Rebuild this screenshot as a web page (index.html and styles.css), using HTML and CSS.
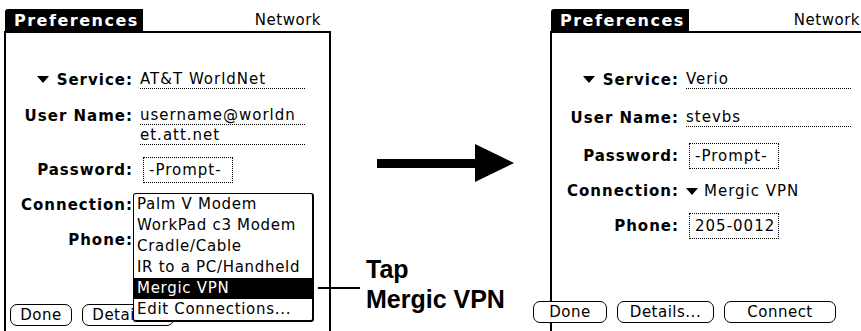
FILE: index.html
```html
<!DOCTYPE html>
<html lang="en">
<head>
    <meta charset="UTF-8">
    <title>Network Preferences - Mergic VPN</title>
    <link rel="stylesheet" href="styles.css">
</head>
<body>
    <div class="page">

        <!-- Linker Bildschirm: Auswahlliste offen -->
        <section class="screen">
            <header class="titlebar">
                <span class="tab">Preferences</span>
                <span class="panel-name">Network</span>
            </header>
            <div class="screen-body">
                <div class="row first">
                    <span class="label"><i class="tri"></i>Service:</span>
                    <span class="value"><span class="field">AT&amp;T WorldNet</span></span>
                </div>
                <div class="row double">
                    <span class="label">User Name:</span>
                    <span class="value">
                        <span class="field">username@worldn</span>
                        <span class="field">et.att.net</span>
                    </span>
                </div>
                <div class="row">
                    <span class="label">Password:</span>
                    <span class="value"><span class="box">-Prompt-</span></span>
                </div>
                <div class="row short">
                    <span class="label">Connection:</span>
                    <span class="value"><i class="tri"></i>Mergic VPN</span>
                </div>
                <div class="row">
                    <span class="label">Phone:</span>
                    <span class="value"><span class="box">205-0012</span></span>
                </div>
                <div class="buttons">
                    <span class="btn done">Done</span>
                    <span class="btn details">Details...</span>
                </div>
            </div>
            <ul class="popup">
                <li>Palm V Modem</li>
                <li>WorkPad c3 Modem</li>
                <li>Cradle/Cable</li>
                <li>IR to a PC/Handheld</li>
                <li class="selected">Mergic VPN</li>
                <li>Edit Connections...</li>
            </ul>
        </section>

        <!-- Mitte: Pfeil und Hinweis -->
        <div class="middle">
            <svg class="big-arrow" width="219" height="40" viewBox="0 0 219 40">
                <rect x="46" y="16" width="100" height="9" fill="#000"/>
                <polygon points="144,1 183,20 144,39" fill="#000"/>
            </svg>
            <div class="callout">
                <span class="callout-line"></span>
                <p class="callout-text">Tap<br>Mergic VPN</p>
            </div>
        </div>

        <!-- Rechter Bildschirm: Ergebnis -->
        <section class="screen result">
            <header class="titlebar">
                <span class="tab">Preferences</span>
                <span class="panel-name">Network</span>
            </header>
            <div class="screen-body">
                <div class="row first">
                    <span class="label"><i class="tri"></i>Service:</span>
                    <span class="value"><span class="field">Verio</span></span>
                </div>
                <div class="row">
                    <span class="label">User Name:</span>
                    <span class="value"><span class="field">stevbs</span></span>
                </div>
                <div class="row">
                    <span class="label">Password:</span>
                    <span class="value"><span class="box">-Prompt-</span></span>
                </div>
                <div class="row short">
                    <span class="label">Connection:</span>
                    <span class="value"><i class="tri"></i>Mergic VPN</span>
                </div>
                <div class="row">
                    <span class="label">Phone:</span>
                    <span class="value"><span class="box">205-0012</span></span>
                </div>
                <div class="buttons wide">
                    <span class="btn done">Done</span>
                    <span class="btn details">Details...</span>
                    <span class="btn connect">Connect</span>
                </div>
            </div>
        </section>

    </div>
</body>
</html>
```

FILE: styles.css
```css
body {
    margin: 0;
    background: #fff;
    color: #000;
    overflow: hidden;
}
.page {
    display: flex;
    width: 861px;
    height: 331px;
    overflow: hidden;
}

/* Palm-Bildschirm */
.screen {
    position: relative;
    flex-shrink: 0;
    width: 327px;
    height: 331px;
    padding-top: 9px;
    box-sizing: border-box;
    display: flex;
    flex-direction: column;
    font-family: "DejaVu Sans", sans-serif;
    font-size: 15px;
    letter-spacing: 1px;
}
.screen:first-child {
    margin-left: 4px;
}
.screen.result {
    width: 320px;
}
.titlebar {
    display: flex;
    justify-content: space-between;
    align-items: flex-start;
    height: 22px;
    border-bottom: 2px solid #000;
}
.tab {
    width: 138px;
    height: 22px;
    margin-left: 1px;
    padding-left: 9px;
    box-sizing: border-box;
    background: #000;
    color: #fff;
    font-weight: bold;
    font-size: 16px;
    letter-spacing: 1.5px;
    line-height: 23px;
    border-top-left-radius: 3px;
}
.panel-name {
    padding-right: 10px;
    line-height: 22px;
    letter-spacing: 0.5px;
}
.screen-body {
    flex: 1;
    display: flex;
    flex-direction: column;
    border-left: 2px solid #000;
    border-right: 2px solid #000;
}

/* Formularzeilen */
.row {
    display: flex;
    align-items: center;
    height: 38px;
    flex-shrink: 0;
}
.row.first {
    margin-top: 28px;
}
.row.short {
    height: 32px;
}
.row.double {
    height: 52px;
    align-items: flex-start;
    padding-top: 8px;
    box-sizing: border-box;
}
.label {
    width: 127px;
    flex-shrink: 0;
    text-align: right;
    font-weight: bold;
    white-space: nowrap;
}
.value {
    margin-left: 7px;
    display: flex;
    flex-direction: column;
    white-space: nowrap;
}
.row.short .value {
    flex-direction: row;
    align-items: center;
}
.field {
    display: block;
    width: 165px;
    line-height: 17px;
    border-bottom: 1px dotted #000;
}
.field + .field {
    margin-top: 2px;
}
.box {
    display: block;
    width: 90px;
    height: 26px;
    margin-left: 3px;
    padding-left: 5px;
    box-sizing: border-box;
    border: 1px dotted #000;
    line-height: 24px;
}
.tri {
    display: inline-block;
    width: 0;
    height: 0;
    margin-right: 8px;
    border-left: 6px solid transparent;
    border-right: 6px solid transparent;
    border-top: 7px solid #000;
    vertical-align: 2px;
}
.row.short .tri {
    margin-right: 6px;
}

/* Knöpfe unten */
.buttons {
    display: flex;
    gap: 10px;
    margin-top: auto;
    margin-bottom: 5px;
    margin-left: 4px;
}
.buttons.wide {
    margin-left: -19px;
    margin-bottom: 8px;
}
.btn {
    height: 22px;
    box-sizing: border-box;
    border: 1px solid #000;
    border-radius: 7px;
    background: #fff;
    line-height: 20px;
    text-align: center;
    letter-spacing: 0.5px;
    flex-shrink: 0;
}
.btn.done {
    width: 62px;
}
.btn.details {
    width: 92px;
}
.buttons.wide .btn.done {
    width: 74px;
}
.buttons.wide .btn.details {
    width: 97px;
}
.btn.connect {
    width: 112px;
}

/* Auswahlliste */
.popup {
    position: absolute;
    left: 129px;
    top: 193px;
    width: 178px;
    margin: 0;
    padding: 0;
    list-style: none;
    background: #fff;
    border: 1px solid #000;
    border-right-width: 2px;
    border-bottom-width: 2px;
    border-radius: 3px;
    letter-spacing: 0.7px;
}
.popup li {
    height: 21px;
    line-height: 21px;
    padding-left: 3px;
    white-space: nowrap;
}
.popup li.selected {
    background: #000;
    color: #fff;
}

/* Mitte */
.middle {
    flex-shrink: 0;
    width: 219px;
    display: flex;
    flex-direction: column;
}
.big-arrow {
    display: block;
    margin-top: 143px;
}
.callout {
    display: flex;
    align-items: flex-start;
    margin-top: 71px;
}
.callout-line {
    width: 42px;
    height: 2px;
    margin-left: -13px;
    margin-top: 33px;
    margin-right: 6px;
    background: #000;
    flex-shrink: 0;
}
.callout-text {
    margin: 0;
    font-family: "Liberation Sans", Arial, sans-serif;
    font-weight: bold;
    font-size: 25px;
    line-height: 30px;
    white-space: nowrap;
}
```
